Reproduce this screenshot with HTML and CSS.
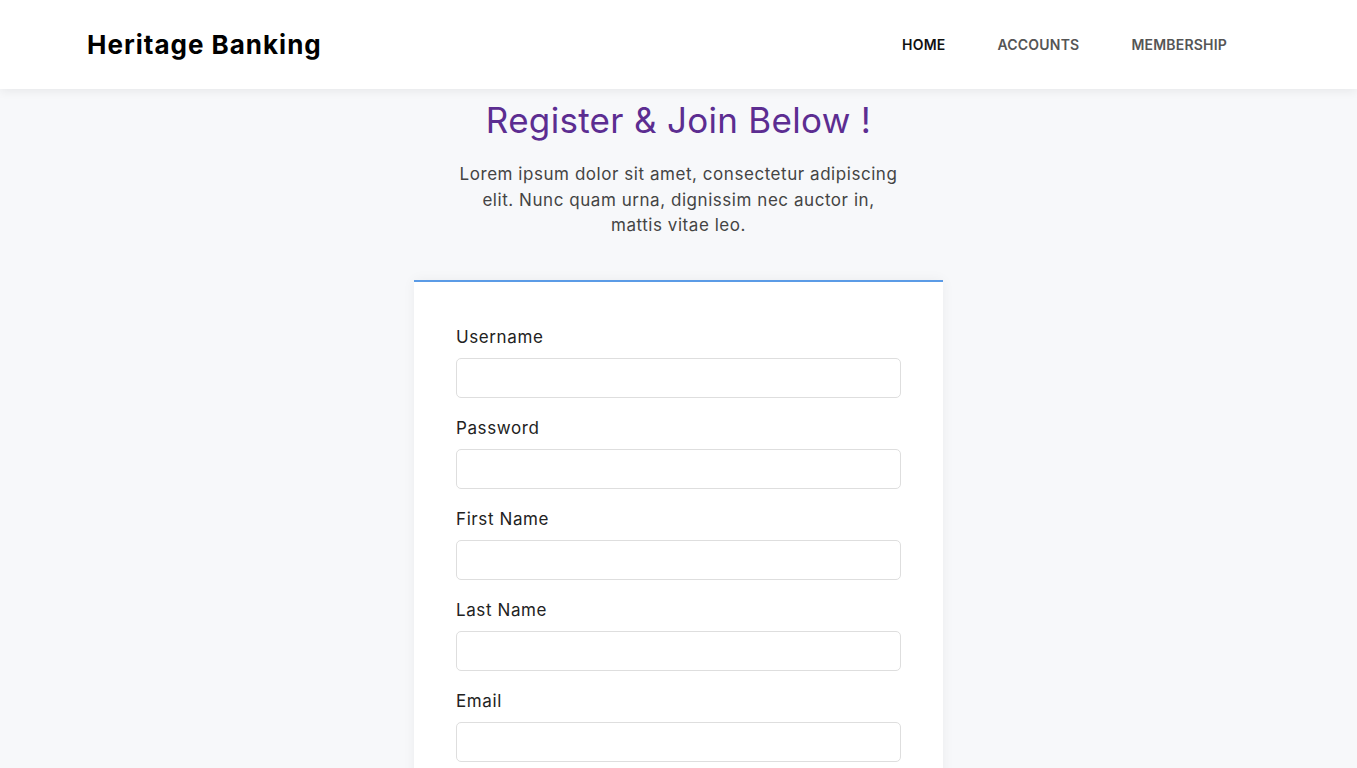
FILE: index.html
```html
<!DOCTYPE html>
<html lang="en">

<head>
  <meta charset="UTF-8">
  <meta name="viewport" content="width=device-width, initial-scale=1.0">
  <title>Heritage Banking - Register</title>
  <link rel="stylesheet" href="styles.css">
</head>

<body>
  <header id="header">
    <div class="logo">Heritage Banking</div>
    <nav class="nav">
      <a href="#" class="active">HOME</a>
      <a href="#">ACCOUNTS</a>
      <a href="#">MEMBERSHIP</a>
    </nav>
  </header>

  <main id="container">
    <h1>Register &amp; Join Below !</h1>
    <p class="intro">Lorem ipsum dolor sit amet, consectetur adipiscing elit. Nunc quam urna, dignissim nec auctor in, mattis vitae leo.</p>

    <form class="card">
      <div class="field">
        <label for="username">Username</label>
        <input id="username" type="text">
      </div>
      <div class="field">
        <label for="password">Password</label>
        <input id="password" type="password">
      </div>
      <div class="field">
        <label for="first">First Name</label>
        <input id="first" type="text">
      </div>
      <div class="field">
        <label for="last">Last Name</label>
        <input id="last" type="text">
      </div>
      <div class="field">
        <label for="email">Email</label>
        <input id="email" type="email">
      </div>
    </form>
  </main>
</body>

</html>
```

FILE: styles.css
```css
* {
  font-family: Inter, "Open Sans", sans-serif;
  margin: 0;
  padding: 0;
  box-sizing: border-box;
}

html, body {
  background-color: #f7f8fa;
}

#header {
  height: 89px;
  background-color: #fff;
  box-shadow: 0 2px 10px rgba(0, 0, 0, 0.07);
  display: flex;
  align-items: center;
  justify-content: space-between;
  padding: 0 130px 0 87px;
  position: relative;
}

.logo {
  font-size: 26px;
  font-weight: 700;
  color: #000;
  letter-spacing: 1px;
}

.nav {
  display: flex;
  gap: 52px;
}

.nav a {
  font-size: 14px;
  font-weight: 600;
  color: #555;
  text-decoration: none;
  letter-spacing: 0.2px;
}

.nav a.active {
  color: #111;
}

#container {
  display: flex;
  flex-direction: column;
  align-items: center;
}

h1 {
  font-size: 35px;
  font-weight: 400;
  color: #5c2d91;
  margin-top: 10px;
  line-height: 42px;
  letter-spacing: 0.3px;
}

.intro {
  width: 445px;
  text-align: center;
  font-size: 17px;
  line-height: 25.5px;
  color: #444;
  margin-top: 21px;
  letter-spacing: 0.55px;
}

.card {
  width: 529px;
  margin-top: 41px;
  background-color: #fff;
  border-top: 2px solid #5b9be6;
  box-shadow: 0 0 12px rgba(0, 0, 0, 0.05);
  padding: 43px 42px 20px;
}

.field {
  display: flex;
  flex-direction: column;
  margin-bottom: 18px;
}

.field label {
  font-size: 17px;
  line-height: 24px;
  color: #222;
  margin-bottom: 9px;
  letter-spacing: 0.6px;
}

.field input {
  height: 40px;
  border: 1px solid #dedede;
  border-radius: 5px;
  padding: 0 12px;
  font-size: 16px;
  background-color: #fff;
}
```
